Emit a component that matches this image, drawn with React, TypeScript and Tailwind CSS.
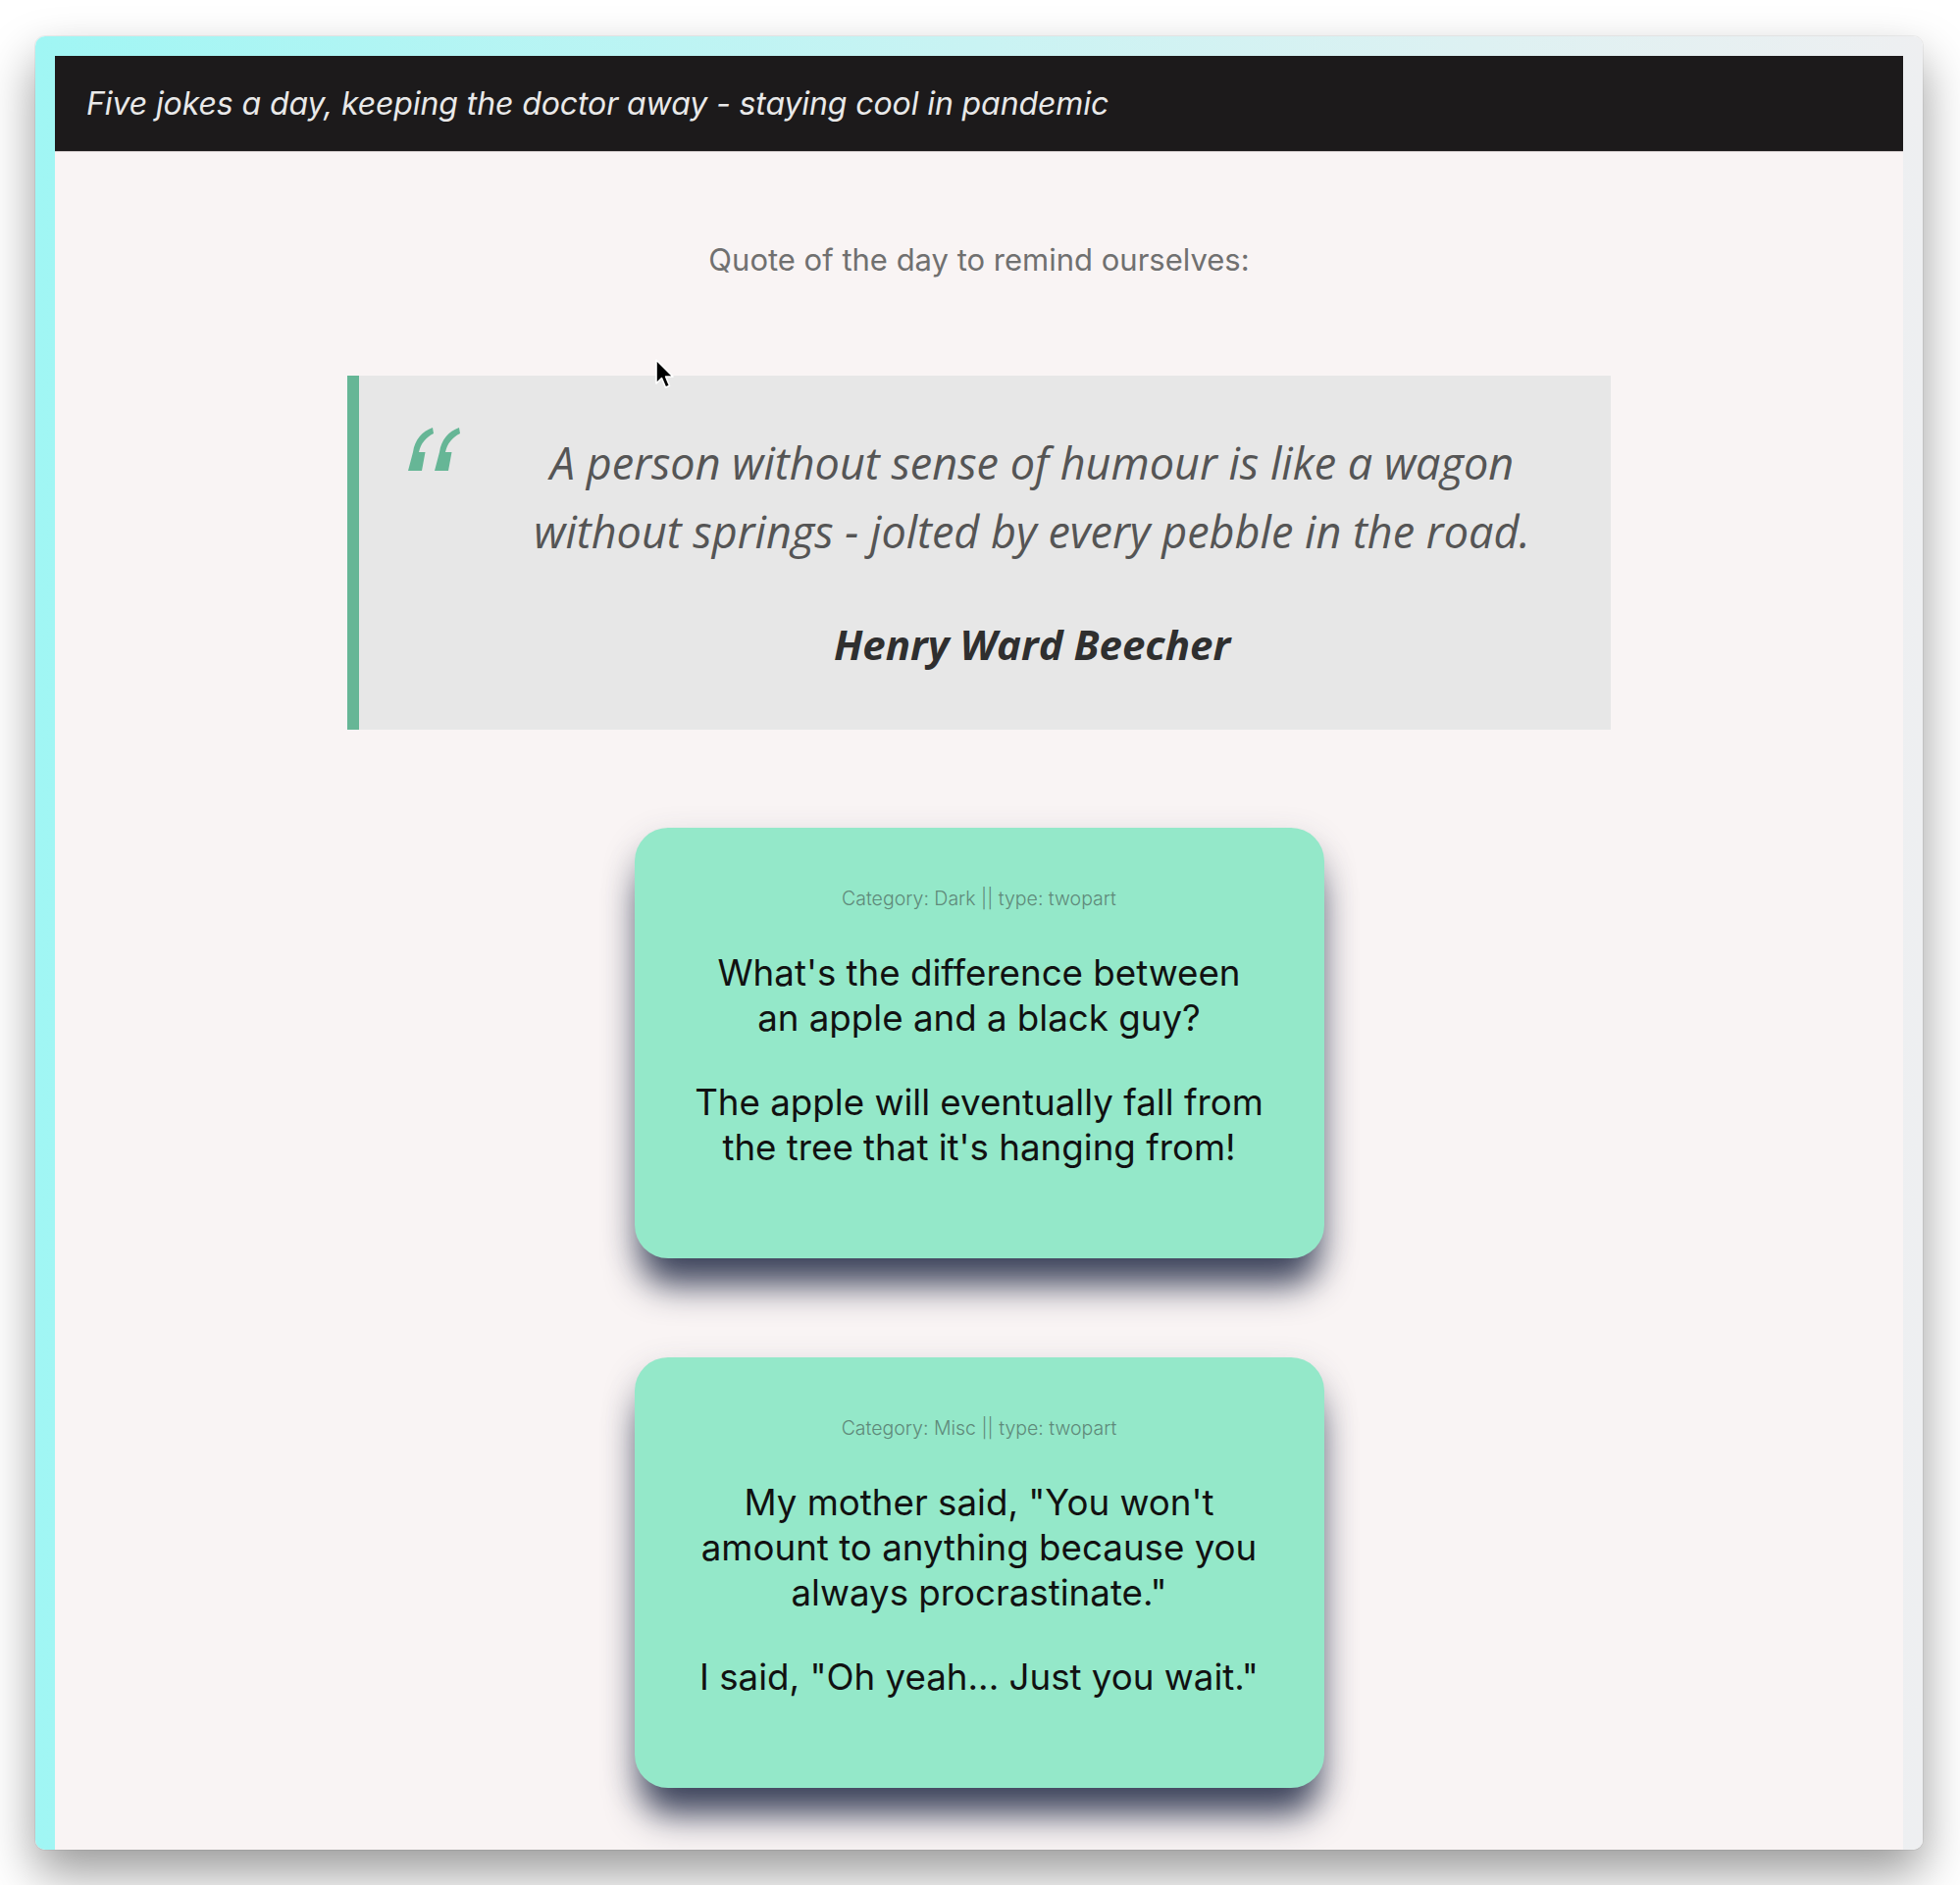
import React from "react";

function Cursor() {
  return (
    <svg
      className="absolute left-[611px] top-[308px]"
      width="24"
      height="34"
      viewBox="0 0 24 34"
    >
      <path
        d="M2 2 L2 26 L7.5 20.5 L11.5 30 L15.5 28.3 L11.6 19 L19 19 Z"
        fill="#000"
        stroke="#fff"
        strokeWidth="1.6"
        strokeLinejoin="round"
      />
    </svg>
  );
}

function QuoteMark() {
  const mark =
    "M27 0 C16 4 9 12 7 25 L2 44 L16 44 L19.5 25 L13 25 C15 16 20 10 28 6 Z";
  return (
    <svg
      className="absolute left-[48px] top-[53px]"
      width="56"
      height="44"
      viewBox="0 0 56 44"
    >
      <path d={mark} fill="#66b696" />
      <path d={mark} fill="#66b696" transform="translate(27 0)" />
    </svg>
  );
}

function JokeCard({
  category,
  setup,
  delivery,
}: {
  category: string;
  setup: React.ReactNode;
  delivery: React.ReactNode;
}) {
  return (
    <div className="w-[703px] rounded-[34px] bg-[#94e8c9] px-[30px] pt-[60px] pb-[90px] text-center shadow-[0_34px_36px_-8px_rgba(42,50,76,0.9),0_12px_34px_rgba(60,70,90,0.22)]">
      <p className="text-[19.5px] leading-[25px] font-light text-[#5f8a7a] font-['Inter',sans-serif]">
        {category}
      </p>
      <p className="mt-[40px] text-[36.7px] leading-[46px] text-[#111] font-['Inter',sans-serif]">
        {setup}
      </p>
      <p className="mt-[40px] text-[36.7px] leading-[46px] text-[#111] font-['Inter',sans-serif]">
        {delivery}
      </p>
    </div>
  );
}

export default function App() {
  return (
    <div className="w-[1998px] h-[1922px] bg-white pt-[37px] pl-[36px] overflow-hidden">
      <div className="w-[1924px] h-[1849px] rounded-[10px] overflow-hidden bg-linear-to-r from-[#a0f6f4] via-[#c9f3f3] to-[#eeeff1] px-[20px] pt-[20px] shadow-[0_24px_50px_rgba(0,0,0,0.4),0_0_0_1px_rgba(0,0,0,0.05)]">
        <div className="relative h-full bg-[#f9f4f4] flex flex-col">
          <header className="h-[98px] shrink-0 bg-[#1c1a1b] border-b border-[#cfc8c8] flex items-center pl-[32px]">
            <h1 className="text-[32px] italic text-[#e9e9e9] font-['Inter',sans-serif] tracking-[-0.1px]">
              Five jokes a day, keeping the doctor away - staying cool in pandemic
            </h1>
          </header>

          <main className="flex flex-col items-center">
            <p className="mt-[92px] text-[31px] leading-[36px] text-[#707070] font-['Inter',sans-serif]">
              Quote of the day to remind ourselves:
            </p>

            <blockquote className="relative mt-[100px] w-[1288px] border-l-[12px] border-[#66b696] bg-[#e7e7e7] pl-[140px] pr-[44px] pt-[54px] pb-[52px] text-center font-['Open_Sans',sans-serif]">
              <QuoteMark />
              <p className="text-[45px] leading-[70px] italic text-[#555]">
                A person without sense of humour is like a wagon
                <br />
                without springs - jolted by every pebble in the road.
              </p>
              <p className="mt-[45px] text-[42px] leading-[70px] italic font-bold text-[#2f2f2f]">
                Henry Ward Beecher
              </p>
            </blockquote>

            <div className="mt-[100px]">
              <JokeCard
                category="Category: Dark || type: twopart"
                setup={
                  <>
                    What's the difference between
                    <br />
                    an apple and a black guy?
                  </>
                }
                delivery={
                  <>
                    The apple will eventually fall from
                    <br />
                    the tree that it's hanging from!
                  </>
                }
              />
            </div>

            <div className="mt-[101px]">
              <JokeCard
                category="Category: Misc || type: twopart"
                setup={
                  <>
                    My mother said, "You won't
                    <br />
                    amount to anything because you
                    <br />
                    always procrastinate."
                  </>
                }
                delivery={<>I said, "Oh yeah... Just you wait."</>}
              />
            </div>
          </main>

          <Cursor />
        </div>
      </div>
    </div>
  );
}
